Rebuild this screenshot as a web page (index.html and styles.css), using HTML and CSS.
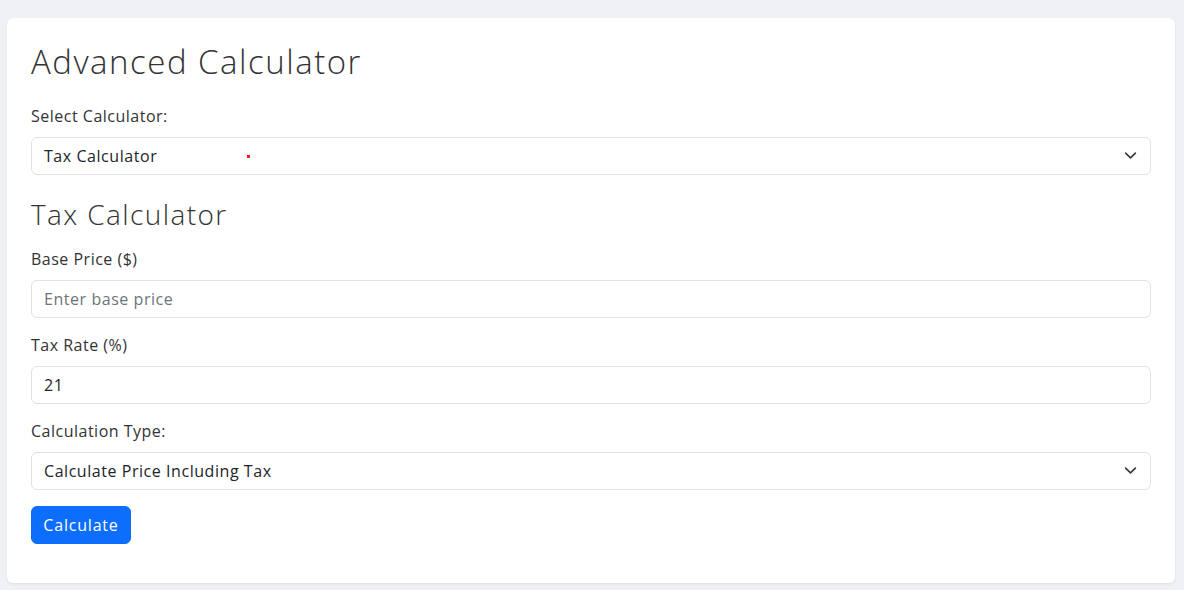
FILE: index.html
```html
<!DOCTYPE html>
<html lang="en">
<head>
<meta charset="utf-8">
<title>Advanced Calculator</title>
<link rel="stylesheet" href="styles.css">
</head>
<body>
<div class="page">
  <div class="card">
    <h2 class="title">Advanced Calculator</h2>
    <div class="group">
      <label class="label">Select Calculator:</label>
      <div class="control select">
        <span>Tax Calculator</span>
        <span class="dot"></span>
        <svg class="chev" viewBox="0 0 16 16" width="16" height="16"><path d="M2 5l6 6 6-6" fill="none" stroke="#343a40" stroke-width="2" stroke-linecap="round" stroke-linejoin="round"/></svg>
      </div>
    </div>
    <h3 class="subtitle">Tax Calculator</h3>
    <div class="group">
      <label class="label">Base Price ($)</label>
      <div class="control placeholder">Enter base price</div>
    </div>
    <div class="group">
      <label class="label">Tax Rate (%)</label>
      <div class="control">21</div>
    </div>
    <div class="group">
      <label class="label">Calculation Type:</label>
      <div class="control select">
        <span>Calculate Price Including Tax</span>
        <svg class="chev" viewBox="0 0 16 16" width="16" height="16"><path d="M2 5l6 6 6-6" fill="none" stroke="#343a40" stroke-width="2" stroke-linecap="round" stroke-linejoin="round"/></svg>
      </div>
    </div>
    <div class="actions">
      <button class="btn">Calculate</button>
    </div>
  </div>
</div>
</body>
</html>
```
FILE: styles.css
```css
* { box-sizing: border-box; }
html, body { margin: 0; padding: 0; }
body {
  background: #f0f1f5;
  font-family: "Open Sans", "DejaVu Sans", sans-serif;
  color: #333333;
  font-size: 16px;
}
.page {
  padding: 18px 9px 7px 7px;
}
.card {
  background: #ffffff;
  border-radius: 6px;
  box-shadow: 0 1px 3px rgba(0,0,0,0.08);
  padding: 24px 24px 24px 24px;
  height: 565px;
}
.title {
  margin: 0 0 22px 0;
  font-size: 33px;
  font-weight: 300;
  line-height: 40px;
  letter-spacing: 1.5px;
}
.subtitle {
  margin: 22px 0 16px 0;
  font-size: 28px;
  font-weight: 300;
  line-height: 34px;
  letter-spacing: 1.4px;
}
.group {
  display: flex;
  flex-direction: column;
  margin-bottom: 15px;
}
.label {
  display: block;
  line-height: 24px;
  margin-bottom: 9px;
  letter-spacing: 0.5px;
}
.control {
  position: relative;
  display: flex;
  align-items: center;
  height: 38px;
  border: 1px solid #dee2e6;
  border-radius: 6px;
  padding: 0 12px;
  line-height: 24px;
  color: #212529;
  letter-spacing: 0.55px;
}
.placeholder { color: #6c757d; }
.chev {
  position: absolute;
  right: 13px;
  top: 11px;
  width: 13px;
  height: 13px;
}
.dot {
  position: absolute;
  left: 215px;
  top: 17px;
  width: 3px;
  height: 3px;
  background: #ff1a1a;
}
.actions { padding-top: 1px; }
.btn {
  font-family: inherit;
  font-size: 16px;
  letter-spacing: 0.8px;
  color: #ffffff;
  background: #0d6efd;
  border: 1px solid #0d6efd;
  border-radius: 6px;
  height: 38px;
  width: 100px;
  padding: 0;
}
```
